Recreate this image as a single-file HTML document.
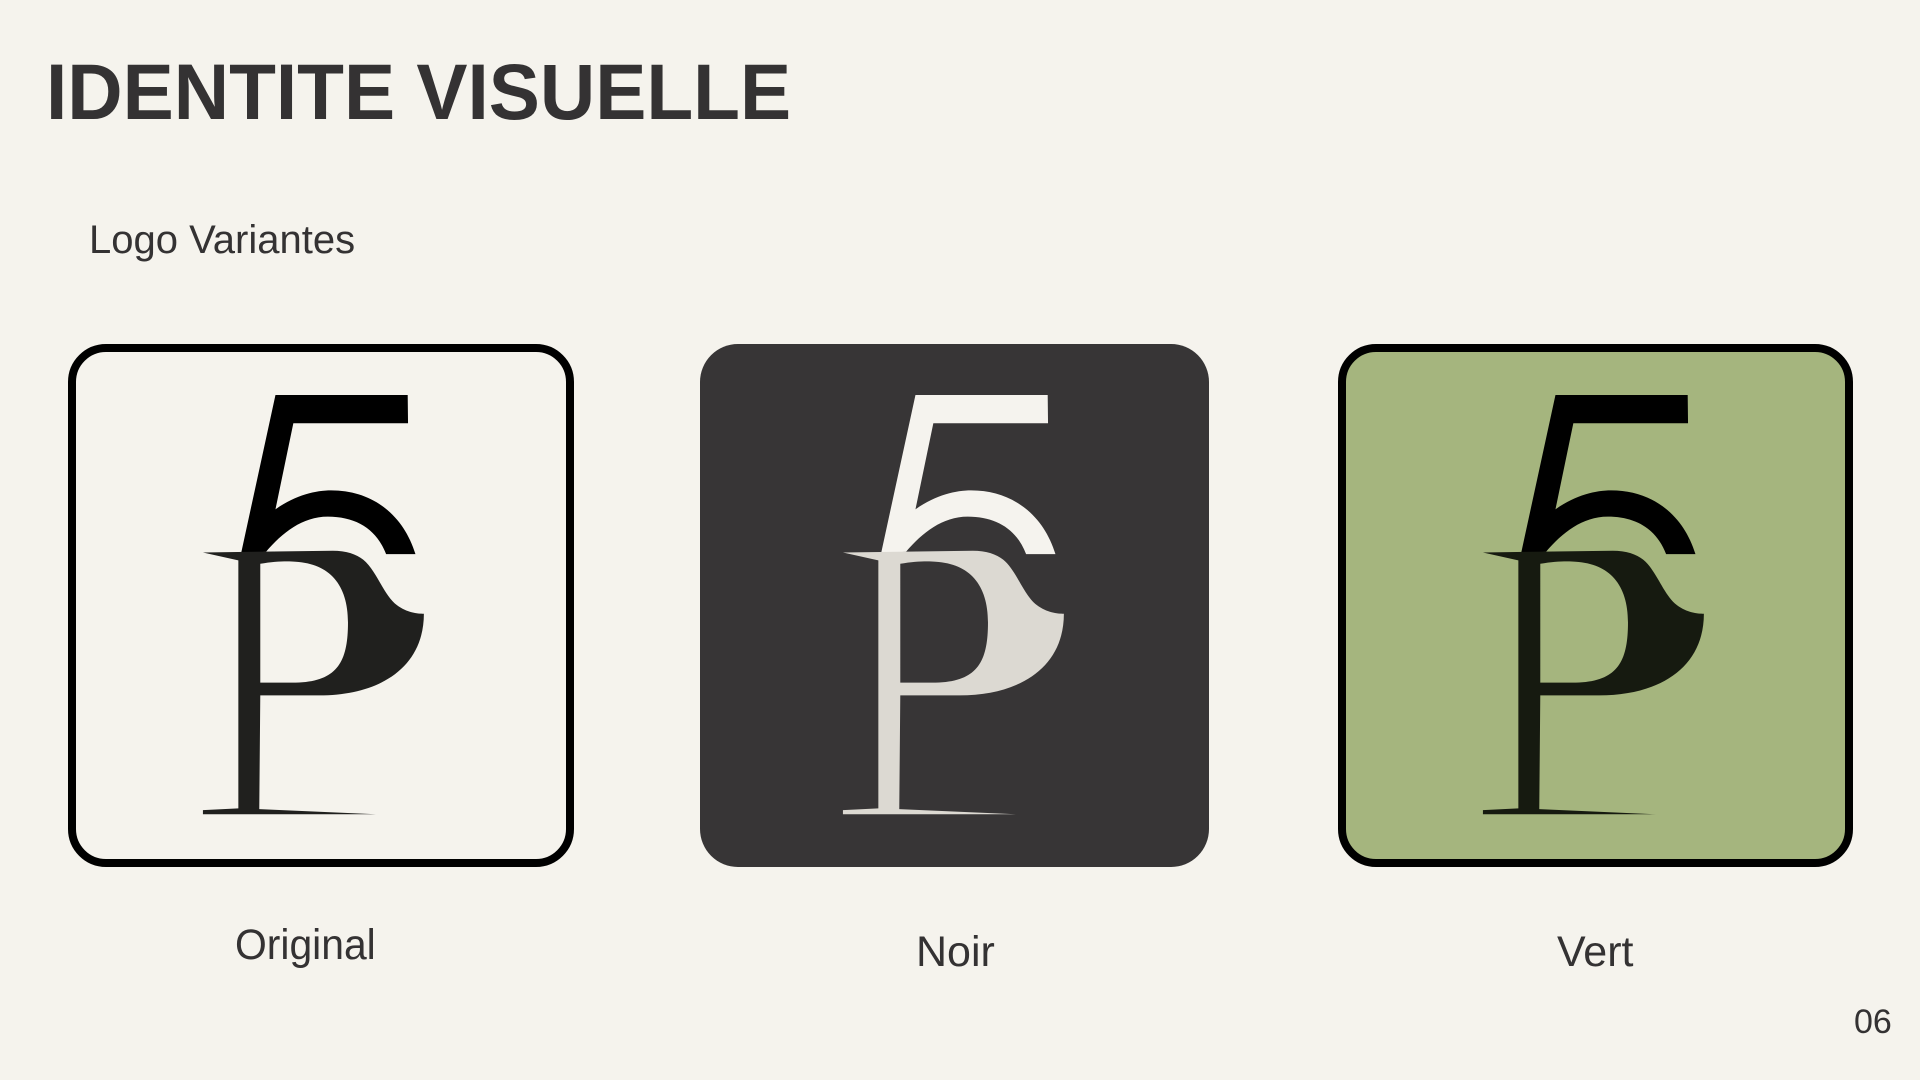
<!DOCTYPE html>
<html><head><meta charset="utf-8"><style>
html,body{margin:0;padding:0}
body{width:1920px;height:1080px;background:#f5f3ed;position:relative;overflow:hidden;font-family:"Liberation Sans",sans-serif;color:#343233}
.t{position:absolute;white-space:nowrap;transform-origin:left top}
.box{position:absolute;top:344px;width:506px;height:523px;box-sizing:border-box;border-radius:38px}
svg{position:absolute;top:344px;width:506px;height:523px}
</style></head><body>
<div class="t" style="left:46px;top:46px;font-size:79px;font-weight:bold;transform:scaleX(0.97)">IDENTITE VISUELLE</div>
<div class="t" style="left:89px;top:218px;font-size:40px">Logo Variantes</div>

<div class="box" style="left:68px;border:8px solid #000;background:#f5f3ed"></div>
<div class="box" style="left:700px;background:#373536;width:509px"></div>
<div class="box" style="left:1338px;border:8px solid #000;background:#a5b57e;width:515px"></div>

<svg style="left:68px" viewBox="25 42 1500 1518" preserveAspectRatio="none">
<path fill="#000" d="M640,190 L1032,190 L1033,272 L693,272 L640,522 C700,480 760,467 805,467 C930,467 1020,540 1055,652 L968,652 C940,580 880,543 795,543 C720,543 660,590 612,645 L538,650 Z"/>
<path fill="#20201e" fill-rule="evenodd" d="M425,647 L810,642 C850,642 880,652 900,668 C940,700 960,770 1000,800 C1030,822 1060,825 1080,825 C1080,980 950,1062 770,1062 L595,1062 L592,1392 L938,1407 L425,1407 L425,1395 L530,1390 L530,670 Z M595,680 C640,672 680,672 700,674 C800,680 855,740 855,850 C855,970 820,1025 690,1025 L595,1025 Z"/>
</svg>
<svg style="left:708px" viewBox="25 42 1500 1518" preserveAspectRatio="none">
<path fill="#f5f3ee" d="M640,190 L1032,190 L1033,272 L693,272 L640,522 C700,480 760,467 805,467 C930,467 1020,540 1055,652 L968,652 C940,580 880,543 795,543 C720,543 660,590 612,645 L538,650 Z"/>
<path fill="#dcd9d2" fill-rule="evenodd" d="M425,647 L810,642 C850,642 880,652 900,668 C940,700 960,770 1000,800 C1030,822 1060,825 1080,825 C1080,980 950,1062 770,1062 L595,1062 L592,1392 L938,1407 L425,1407 L425,1395 L530,1390 L530,670 Z M595,680 C640,672 680,672 700,674 C800,680 855,740 855,850 C855,970 820,1025 690,1025 L595,1025 Z"/>
</svg>
<svg style="left:1348px" viewBox="25 42 1500 1518" preserveAspectRatio="none">
<path fill="#000" d="M640,190 L1032,190 L1033,272 L693,272 L640,522 C700,480 760,467 805,467 C930,467 1020,540 1055,652 L968,652 C940,580 880,543 795,543 C720,543 660,590 612,645 L538,650 Z"/>
<path fill="#161a10" fill-rule="evenodd" d="M425,647 L810,642 C850,642 880,652 900,668 C940,700 960,770 1000,800 C1030,822 1060,825 1080,825 C1080,980 950,1062 770,1062 L595,1062 L592,1392 L938,1407 L425,1407 L425,1395 L530,1390 L530,670 Z M595,680 C640,672 680,672 700,674 C800,680 855,740 855,850 C855,970 820,1025 690,1025 L595,1025 Z"/>
</svg>

<div class="t" style="left:235px;top:921px;font-size:43px;transform:scaleX(0.95)">Original</div>
<div class="t" style="left:916px;top:928px;font-size:43px">Noir</div>
<div class="t" style="left:1557px;top:928px;font-size:43px">Vert</div>
<div class="t" style="left:1854px;top:1003px;font-size:34px">06</div>
</body></html>
